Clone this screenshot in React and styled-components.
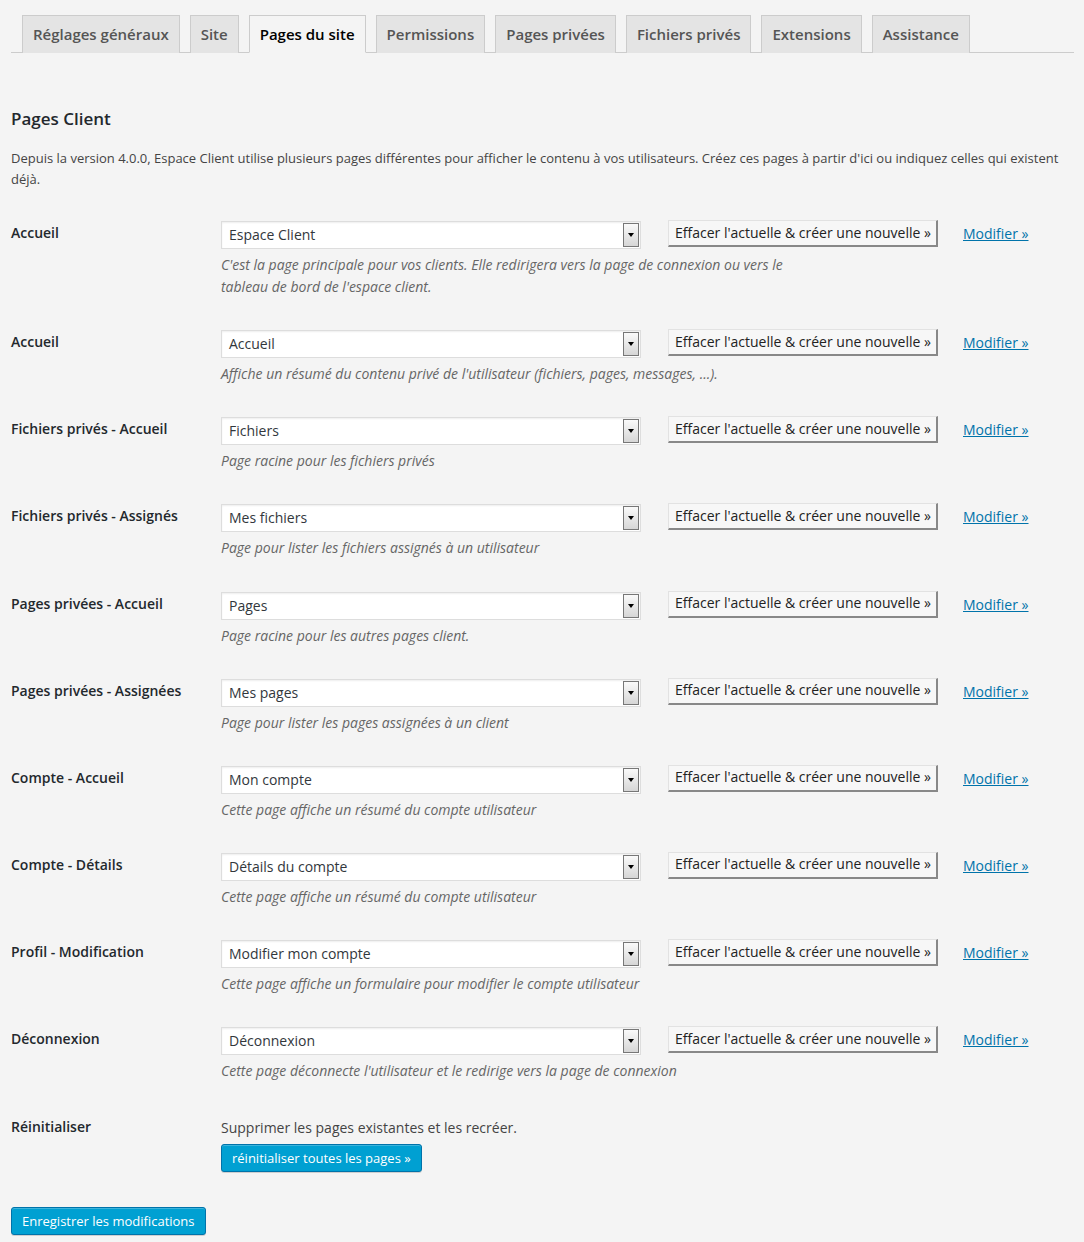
import React from "react";
import styled, { createGlobalStyle } from "styled-components";

const Global = createGlobalStyle`
  html, body { margin: 0; padding: 0; background: #f4f4f4; }
  body { font-family: "Open Sans", "Noto Sans", sans-serif; color: #444; }
  * { box-sizing: border-box; }
`;

const Page = styled.div`
  padding: 15px 10px 8px 11px;
  min-height: 1242px;
`;

const TabBar = styled.div`
  display: flex;
  gap: 10px;
  padding-left: 11px;
  border-bottom: 1px solid #ccc;
  height: 38px;
`;

const Tab = styled.div`
  height: 38px;
  padding: 0 10px 1px;
  display: flex;
  align-items: center;
  font-size: 15px;
  font-weight: 600;
  color: ${(p) => (p.$active ? "#000" : "#555")};
  background: ${(p) => (p.$active ? "#f4f4f4" : "#e4e4e4")};
  border: 1px solid #ccc;
  border-bottom: ${(p) => (p.$active ? "1px solid #f4f4f4" : "none")};
  line-height: 24px;
`;

const Heading = styled.h2`
  margin: 54px 0 0;
  font-size: 17px;
  font-weight: 600;
  color: #23282d;
  line-height: 24px;
`;

const Intro = styled.p`
  margin: 17px 0 0;
  font-size: 13px;
  line-height: 21px;
  color: #444;
`;

const Table = styled.div`
  margin-top: 16px;
  display: grid;
  grid-template-columns: 210px 1fr;
`;

const Label = styled.div`
  padding-top: ${(p) => p.$pt || 17}px;
  font-size: 14px;
  font-weight: 600;
  color: #23282d;
  line-height: 20px;
`;

const Field = styled.div`
  padding: 15px 0 17.15px;
`;

const Controls = styled.div`
  display: flex;
  align-items: flex-start;
  height: 28px;
`;

const Select = styled.div`
  width: 420px;
  height: 28px;
  display: flex;
  align-items: center;
  background: #fff;
  border: 1px solid #ddd;
  box-shadow: inset 0 1px 2px rgba(0, 0, 0, 0.07);
  padding: 1px 1px 1px 7px;
`;

const SelectValue = styled.span`
  flex: 1;
  font-size: 14px;
  color: #32373c;
  line-height: 20px;
`;

const Arrow = styled.span`
  width: 16px;
  height: 100%;
  border: 1px solid #777;
  background: linear-gradient(#fafafa, #d6d6d6);
  display: flex;
  align-items: center;
  justify-content: center;
  &::after {
    content: "";
    border-left: 3.5px solid transparent;
    border-right: 3.5px solid transparent;
    border-top: 4px solid #000;
  }
`;

const OldButton = styled.button`
  margin: -1px 0 0 27px;
  height: 27px;
  width: 270px;
  padding: 0 6px 1px;
  font-family: inherit;
  font-size: 14px;
  line-height: 20px;
  color: #222;
  background: #f7f7f7;
  border-top: 1px solid #e2e2e2;
  border-left: 1px solid #e2e2e2;
  border-right: 2px solid #888;
  border-bottom: 2px solid #888;
  text-align: center;
  white-space: nowrap;
  cursor: pointer;
`;

const EditLink = styled.a`
  margin: 2px 0 0 25px;
  font-size: 14px;
  line-height: 22px;
  color: #0073aa;
  text-decoration: underline;
`;

const Desc = styled.p`
  margin: 5px 0 0;
  max-width: 590px;
  font-size: 14px;
  font-style: italic;
  line-height: 22px;
  color: #666;
`;

const ResetField = styled.div`
  padding: 18px 0 17px;
`;

const ResetText = styled.p`
  margin: 0;
  font-size: 14px;
  line-height: 22px;
  color: #444;
`;

const PrimaryButton = styled.button`
  display: block;
  margin-top: ${(p) => p.$mt || 0}px;
  height: 28px;
  padding: 0 10px 1px;
  font-family: inherit;
  font-size: 13px;
  color: #fff;
  background: #00a0d2;
  border: 1px solid #0073aa;
  border-radius: 3px;
  box-shadow: inset 0 1px 0 rgba(120, 200, 230, 0.5), 0 1px 0 rgba(0, 0, 0, 0.15);
  cursor: pointer;
`;

const tabs = [
  "Réglages généraux",
  "Site",
  "Pages du site",
  "Permissions",
  "Pages privées",
  "Fichiers privés",
  "Extensions",
  "Assistance",
];

const rows = [
  ["Accueil", "Espace Client", "C'est la page principale pour vos clients. Elle redirigera vers la page de connexion ou vers le tableau de bord de l'espace client."],
  ["Accueil", "Accueil", "Affiche un résumé du contenu privé de l'utilisateur (fichiers, pages, messages, ...)."],
  ["Fichiers privés - Accueil", "Fichiers", "Page racine pour les fichiers privés"],
  ["Fichiers privés - Assignés", "Mes fichiers", "Page pour lister les fichiers assignés à un utilisateur"],
  ["Pages privées - Accueil", "Pages", "Page racine pour les autres pages client."],
  ["Pages privées - Assignées", "Mes pages", "Page pour lister les pages assignées à un client"],
  ["Compte - Accueil", "Mon compte", "Cette page affiche un résumé du compte utilisateur"],
  ["Compte - Détails", "Détails du compte", "Cette page affiche un résumé du compte utilisateur"],
  ["Profil - Modification", "Modifier mon compte", "Cette page affiche un formulaire pour modifier le compte utilisateur"],
  ["Déconnexion", "Déconnexion", "Cette page déconnecte l'utilisateur et le redirige vers la page de connexion"],
];

export default function App() {
  return (
    <>
      <Global />
      <Page>
        <TabBar>
          {tabs.map((t) => (
            <Tab key={t} $active={t === "Pages du site"}>
              {t}
            </Tab>
          ))}
        </TabBar>
        <Heading>Pages Client</Heading>
        <Intro>
          Depuis la version 4.0.0, Espace Client utilise plusieurs pages différentes pour afficher le contenu à vos utilisateurs. Créez ces pages à partir d'ici ou indiquez celles qui existent déjà.
        </Intro>
        <Table>
          {rows.map(([label, value, desc], i) => (
            <React.Fragment key={i}>
              <Label>{label}</Label>
              <Field>
                <Controls>
                  <Select>
                    <SelectValue>{value}</SelectValue>
                    <Arrow />
                  </Select>
                  <OldButton>Effacer l'actuelle &amp; créer une nouvelle »</OldButton>
                  <EditLink href="#">Modifier »</EditLink>
                </Controls>
                <Desc>{desc}</Desc>
              </Field>
            </React.Fragment>
          ))}
          <Label $pt={18}>Réinitialiser</Label>
          <ResetField>
            <ResetText>Supprimer les pages existantes et les recréer.</ResetText>
            <PrimaryButton $mt={5}>réinitialiser toutes les pages »</PrimaryButton>
          </ResetField>
        </Table>
        <PrimaryButton $mt={18}>Enregistrer les modifications</PrimaryButton>
      </Page>
    </>
  );
}
